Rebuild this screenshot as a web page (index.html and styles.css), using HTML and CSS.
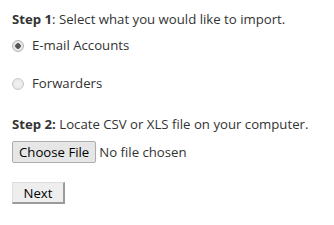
FILE: index.html
```html
<!DOCTYPE html>
<html lang="en">
<head>
    <meta charset="UTF-8">
    <title>Import</title>
    <link rel="stylesheet" href="styles.css">
</head>
<body>
    <form class="import-form">
        <p class="step"><b>Step 1</b>: Select what you would like to import.</p>
        <label class="option"><input type="radio" name="type" checked> E-mail Accounts</label>
        <label class="option"><input type="radio" name="type"> Forwarders</label>
        <p class="step step-two"><b>Step 2:</b> Locate CSV or XLS file on your computer.</p>
        <div class="file-row">
            <span class="file-btn">Choose File</span>
            <span class="file-name">No file chosen</span>
        </div>
        <button type="button" class="next-btn">Next</button>
    </form>
</body>
</html>
```

FILE: styles.css
```css
body {
    margin: 0;
    padding: 0 12px;
    background: #fff;
    color: #333;
    font-family: 'Open Sans', 'Liberation Sans', sans-serif;
    font-size: 13.2px;
}
.import-form {
    display: flex;
    flex-direction: column;
    align-items: flex-start;
}
.step {
    margin: 10px 0 7px;
    line-height: 18px;
}
.step b {
    font-weight: 700;
}
.option {
    display: flex;
    align-items: center;
    gap: 8px;
    height: 20px;
    margin-bottom: 18px;
}
.option input {
    -webkit-appearance: none;
    appearance: none;
    margin: 1px 0 0;
    width: 12px;
    height: 12px;
    border: 1px solid #c8c8c8;
    border-radius: 50%;
    background: radial-gradient(circle, #f4f4f4 0, #e2e2e2 100%);
    box-sizing: border-box;
}
.option input:checked {
    background: radial-gradient(circle, #555 0, #555 2.5px, #e4e4e4 3px, #ececec 100%);
    border-color: #b4b4b4;
}
.step-two {
    margin-top: 4px;
    margin-bottom: 8px;
}
.file-row {
    display: flex;
    align-items: center;
    gap: 3px;
}
.file-btn {
    display: inline-block;
    padding: 1px 6px;
    color: #000;
    background: #e6e6e6;
    border: 1px solid #adadad;
    border-radius: 2px;
    line-height: 18px;
}
.next-btn {
    margin-top: 19px;
    width: 53px;
    height: 22px;
    padding: 0;
    font: inherit;
    color: #000;
    background: #eee;
    border-style: solid;
    border-color: #ddd #9a9a9a #9a9a9a #ddd;
    border-width: 1px 2px 2px 1px;
}
```
